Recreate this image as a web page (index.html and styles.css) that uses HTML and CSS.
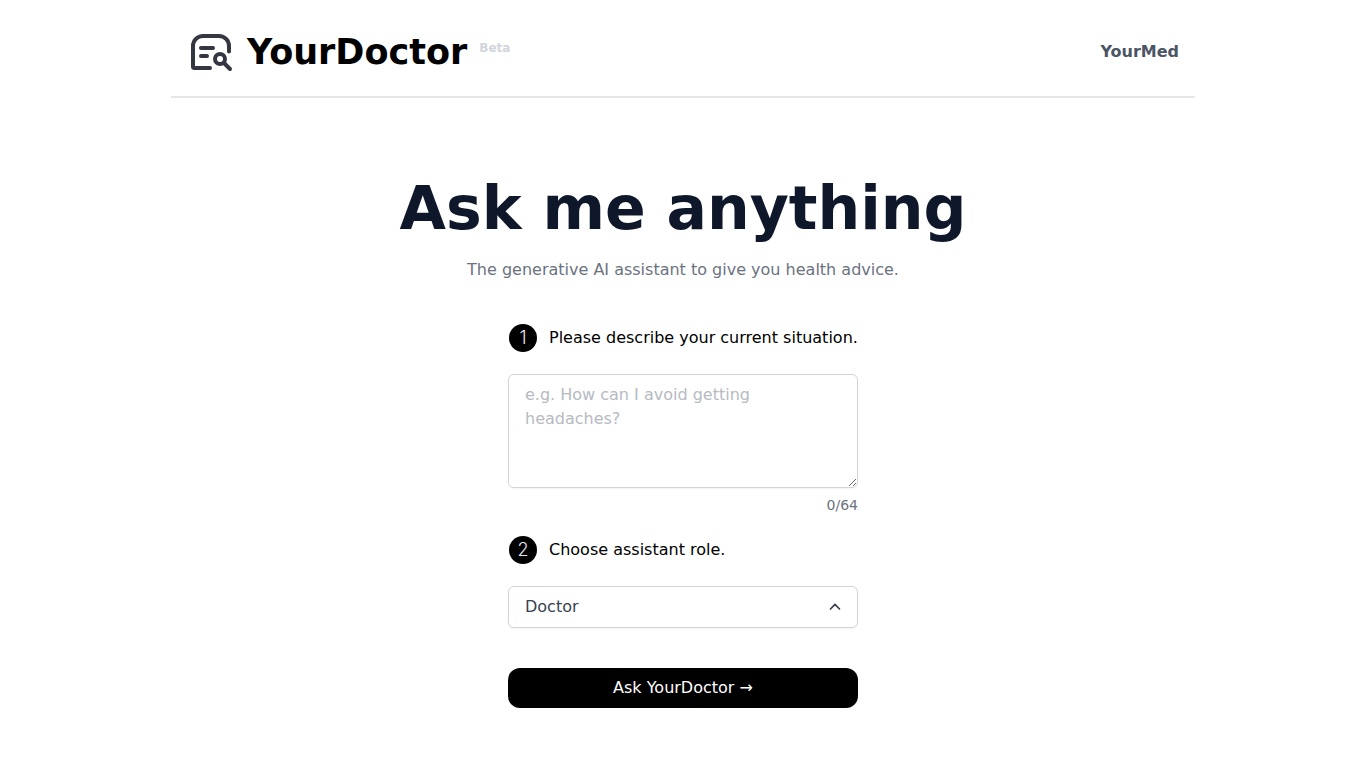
FILE: index.html
```html
<!DOCTYPE html>
<html lang="en">
<head>
    <meta charset="UTF-8">
    <meta name="viewport" content="width=device-width, initial-scale=1.0">
    <title>YourDoctor</title>
    <link rel="stylesheet" href="styles.css">
</head>
<body>
    <header class="header">
        <a class="brand" href="#">
            <svg class="brand-icon" viewBox="0 0 48 48" aria-hidden="true">
                <path d="M42 23.500V18a10 10 0 0 0-10-10H16A10 10 0 0 0 6 18v20.500a1.500 1.500 0 0 0 1.500 1.500H23"/>
                <path d="M14 20h12M14 28h6"/>
                <circle cx="33" cy="31" r="5"/>
                <path d="M37 35l6 6"/>
            </svg>
            <span class="brand-name">YourDoctor</span>
            <span class="beta">Beta</span>
        </a>
        <a class="nav-link" href="#">YourMed</a>
    </header>

    <main class="main">
        <h1>Ask me anything</h1>
        <p class="subtitle">The generative AI assistant to give you health advice.</p>

        <form class="ask-form">
            <!-- Step 1 -->
            <label class="step" for="situation">
                <span class="step-number">1</span>
                Please describe your current situation.
            </label>
            <textarea id="situation" class="field situation" rows="4" maxlength="64" placeholder="e.g. How can I avoid getting headaches?"></textarea>
            <p class="counter"><span id="count">0</span>/64</p>

            <!-- Step 2 -->
            <label class="step" for="role">
                <span class="step-number">2</span>
                Choose assistant role.
            </label>
            <div class="select-wrap">
                <select id="role" class="field role">
                    <option>Doctor</option>
                </select>
                <svg class="chevron" viewBox="0 0 20 20" aria-hidden="true">
                    <path d="M5.500 12L10 7.300l4.500 4.700"/>
                </svg>
            </div>

            <button class="submit" type="submit">Ask YourDoctor &rarr;</button>
        </form>
    </main>

    <script>
        const situation = document.getElementById('situation');

        situation.addEventListener('input', function () {
            document.getElementById('count').textContent = situation.value.length;
        });
    </script>
</body>
</html>
```
FILE: styles.css
```css
* {
    box-sizing: border-box;
}

body {
    margin: 0;
    background: #fff;
    color: #000;
    font-family: "DejaVu Sans", sans-serif;
    font-size: 16px;
    line-height: 24px;
}

a {
    color: inherit;
    text-decoration: none;
}

.header {
    display: flex;
    justify-content: space-between;
    align-items: center;
    max-width: 1024px;
    margin: 0 auto;
    padding: 28px 16px 20px;
    border-bottom: 2px solid #e5e7eb;
}

.brand {
    display: flex;
    align-items: center;
    gap: 12px;
}

.brand-icon {
    width: 48px;
    height: 48px;
    fill: none;
    stroke: #343741;
    stroke-width: 4;
    stroke-linecap: round;
    stroke-linejoin: round;
}

.brand-name {
    font-size: 35px;
    font-weight: bold;
    line-height: 48px;
}

.beta {
    padding-bottom: 8px;
    color: #d1d5db;
    font-size: 12px;
    font-weight: bold;
    line-height: 16px;
}

.nav-link {
    color: #4b5563;
    font-weight: bold;
}

.main {
    display: flex;
    flex-direction: column;
    align-items: center;
    padding: 80px 16px 60px;
}

h1 {
    margin: 0;
    color: #0f172a;
    font-size: 60px;
    line-height: 60px;
    text-align: center;
}

.subtitle {
    margin: 20px 0 40px;
    color: #6b7280;
    text-align: center;
}

.ask-form {
    display: flex;
    flex-direction: column;
    width: 100%;
    max-width: 350px;
}

.step {
    display: flex;
    align-items: center;
    gap: 12px;
    padding-left: 1px;
    margin-bottom: 20px;
    line-height: 32px;
    white-space: nowrap;
}

.step-number {
    display: flex;
    flex-shrink: 0;
    align-items: center;
    justify-content: center;
    width: 28px;
    height: 28px;
    border-radius: 50%;
    background: #000;
    color: #e5e7eb;
    font-family: Inter, sans-serif;
    font-size: 18px;
    font-weight: 300;
}

.field {
    display: block;
    width: 100%;
    border: 1px solid #d1d5db;
    border-radius: 6px;
    background: #fff;
    box-shadow: 0 1px 2px rgba(0, 0, 0, 0.05);
    font: inherit;
}

.situation {
    padding: 8px 16px;
    color: #000;
}

.situation::placeholder {
    color: #b6bac2;
}

.counter {
    margin: 8px 0 20px;
    color: #6b7280;
    font-size: 14px;
    line-height: 18px;
    text-align: right;
}

.select-wrap {
    position: relative;
}

.role {
    appearance: none;
    height: 42px;
    padding: 8px 16px;
    color: #374151;
}

.chevron {
    position: absolute;
    top: 11px;
    right: 13px;
    width: 20px;
    height: 20px;
    fill: none;
    stroke: #374151;
    stroke-width: 1.7;
    stroke-linecap: round;
    stroke-linejoin: round;
    pointer-events: none;
}

.submit {
    margin-top: 40px;
    padding: 8px 16px;
    border: none;
    border-radius: 12px;
    background: #000;
    color: #fff;
    font: inherit;
    cursor: pointer;
}

.submit:hover {
    background: #1f2937;
}
```
